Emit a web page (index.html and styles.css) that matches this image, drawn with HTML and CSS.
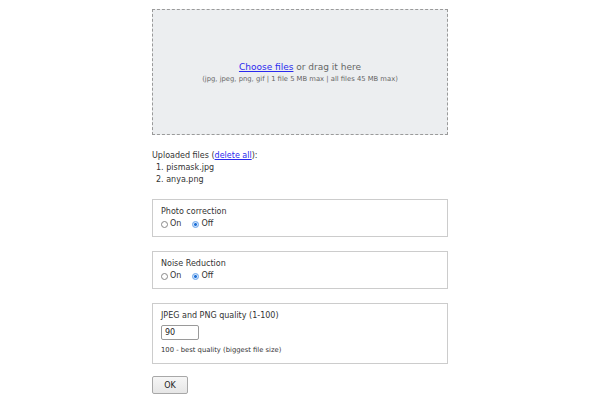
FILE: index.html
```html
<!DOCTYPE html>
<html lang="en">
<head>
  <meta charset="UTF-8" />
  <title>Upload images</title>
  <link rel="stylesheet" href="styles.css">
</head>
<body>
  <div class="wrap">
    <div class="dropzone">
      <div class="drop-main"><a href="#">Choose files</a> or drag it here</div>
      <div class="drop-hint">(jpg, jpeg, png, gif | 1 file 5 MB max | all files 45 MB max)</div>
    </div>

    <div class="uploaded">
      Uploaded files (<a href="#">delete all</a>):
      <ol>
        <li>pismask.jpg</li>
        <li>anya.png</li>
      </ol>
    </div>

    <div class="box">
      <div class="box-title">Photo correction</div>
      <div class="radios">
        <label><input type="radio" name="photo" />On</label>
        <label><input type="radio" name="photo" checked />Off</label>
      </div>
    </div>

    <div class="box">
      <div class="box-title">Noise Reduction</div>
      <div class="radios">
        <label><input type="radio" name="noise" />On</label>
        <label><input type="radio" name="noise" checked />Off</label>
      </div>
    </div>

    <div class="box">
      <div class="box-title">JPEG and PNG quality (1-100)</div>
      <input class="quality" type="text" value="90" />
      <div class="note">100 - best quality (biggest file size)</div>
    </div>

    <button class="ok">OK</button>
  </div>
</body>
</html>
```

FILE: styles.css
```css
body {
  margin: 0;
  background: #fff;
  font-family: 'DejaVu Sans', Verdana, sans-serif;
  font-size: 8px;
  color: #333;
}

a {
  color: #2a2aee;
}

.wrap {
  width: 296px;
  margin: 0 auto;
  padding-top: 9px;
}

.dropzone {
  height: 124px;
  border: 1px dashed #9a9a9a;
  background: #eceef0;
  display: flex;
  flex-direction: column;
  justify-content: center;
  align-items: center;
  color: #666;
}

.drop-main {
  font-size: 9px;
  line-height: 11px;
  margin-top: 2px;
}

.drop-hint {
  font-size: 6.8px;
  line-height: 9px;
  margin-top: 2px;
  color: #666;
}

.uploaded {
  margin-top: 15px;
  line-height: 12px;
}

.uploaded ol {
  margin: 0;
  padding-left: 4px;
  list-style-position: inside;
}

.box {
  margin-top: 14px;
  border: 1px solid #cccccc;
  padding: 6px 8px 6px;
  line-height: 12px;
}

.uploaded + .box {
  margin-top: 13px;
}

.radios {
  display: flex;
  gap: 11px;
}

.radios label {
  display: flex;
  align-items: center;
  gap: 2px;
}

.radios input {
  appearance: none;
  width: 7px;
  height: 7px;
  margin: 0;
  border: 1px solid #888;
  border-radius: 50%;
  background: #fff;
}

.radios input:checked {
  border-color: #6aa5ea;
  background: radial-gradient(circle, #1c6fd6 35%, #cfe2fb 45%);
}

.quality {
  display: block;
  box-sizing: border-box;
  width: 38px;
  height: 15px;
  margin: 3px 0 4px 0;
  padding: 0 3px;
  border: 1px solid #9a9a9a;
  border-radius: 2px;
  font-family: inherit;
  font-size: 8px;
  color: #222;
}

.note {
  font-size: 6.8px;
  line-height: 13px;
}

.ok {
  margin-top: 12px;
  width: 36px;
  height: 18px;
  border: 1px solid #a8a8a8;
  border-radius: 2px;
  background: linear-gradient(#f6f6f6, #e6e6e6);
  font-family: inherit;
  font-size: 8px;
  color: #222;
}
```
